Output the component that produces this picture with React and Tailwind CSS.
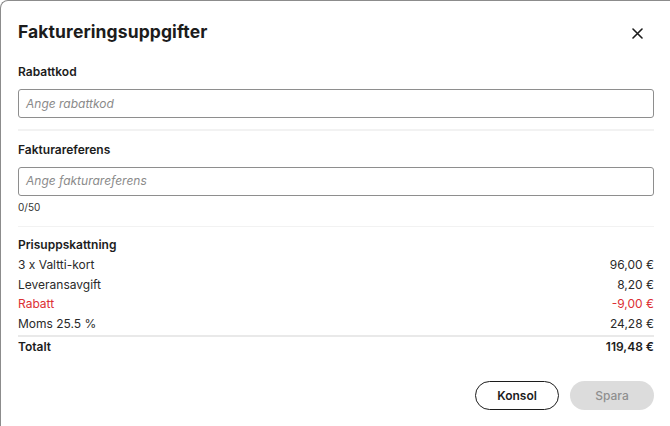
import React from "react";

export default function App() {
  const rows = [
    { label: "3 x Valtti-kort", value: "96,00 €" },
    { label: "Leveransavgift", value: "8,20 €" },
    { label: "Rabatt", value: "-9,00 €", red: true },
    { label: "Moms 25.5 %", value: "24,28 €" },
  ];
  return (
    <div
      className="w-[670px] h-[426px] bg-white overflow-hidden text-[#1c1c1c]"
      style={{ fontFamily: "Inter, 'Liberation Sans', sans-serif" }}
    >
      <div className="w-[680px] h-[440px] border-l-[1.5px] border-t-[1.5px] border-[#8c8c8c] rounded-tl-[8px] pl-[17px] pr-[26px]">
        <div className="w-[636px]">
          <div className="flex items-center justify-between pt-[19px] h-[42px]">
            <h1 className="text-[17.5px] font-bold leading-[22px] tracking-[0.1px]">Faktureringsuppgifter</h1>
            <svg width="11" height="11" viewBox="0 0 11 11" className="mr-[11px] mt-[3px]">
              <path d="M1 1L10 10M10 1L1 10" stroke="#1c1c1c" strokeWidth="1.6" strokeLinecap="round" />
            </svg>
          </div>
          <div className="pt-[21px] text-[12px] font-semibold leading-[16px]">Rabattkod</div>
          <div className="mt-[9px] h-[29px] border border-[#8e8e8e] rounded-[3px] flex items-center px-[7px]">
            <span className="text-[12px] italic text-[#8a8a8a]">Ange rabattkod</span>
          </div>
          <div className="mt-[11px] h-[1.5px] bg-[#f2f2f2]" />
          <div className="pt-[11px] text-[12px] font-semibold leading-[16px]">Fakturareferens</div>
          <div className="mt-[9px] h-[29px] border border-[#8e8e8e] rounded-[3px] flex items-center px-[7px]">
            <span className="text-[12px] italic text-[#8a8a8a]">Ange fakturareferens</span>
          </div>
          <div className="pt-[4px] text-[10px] leading-[14px] text-[#333]">0/50</div>
          <div className="mt-[12px] h-[1.5px] bg-[#f2f2f2]" />
          <div className="pt-[10px] text-[12px] font-semibold leading-[16px]">Prisuppskattning</div>
          <div className="pt-[2px]">
            {rows.map((r) => (
              <div
                key={r.label}
                className={`flex justify-between text-[12px] leading-[19.6px] ${r.red ? "text-[#dc3034]" : "text-[#2a2a2a]"}`}
              >
                <span>{r.label}</span>
                <span>{r.value}</span>
              </div>
            ))}
          </div>
          <div className="mt-[2px] h-[2px] bg-[#e9e9e9]" />
          <div className="flex justify-between text-[12px] font-semibold leading-[18px] pt-[1px]">
            <span>Totalt</span>
            <span>119,48 €</span>
          </div>
          <div className="flex justify-end gap-[11px] mt-[25px]">
            <button className="w-[84px] h-[29px] rounded-full border border-[#1c1c1c] text-[12px] font-semibold bg-white">
              Konsol
            </button>
            <button className="w-[84px] h-[29px] rounded-full bg-[#dcdcdc] text-[12px] font-medium text-[#8f8f8f]">
              Spara
            </button>
          </div>
        </div>
      </div>
    </div>
  );
}
